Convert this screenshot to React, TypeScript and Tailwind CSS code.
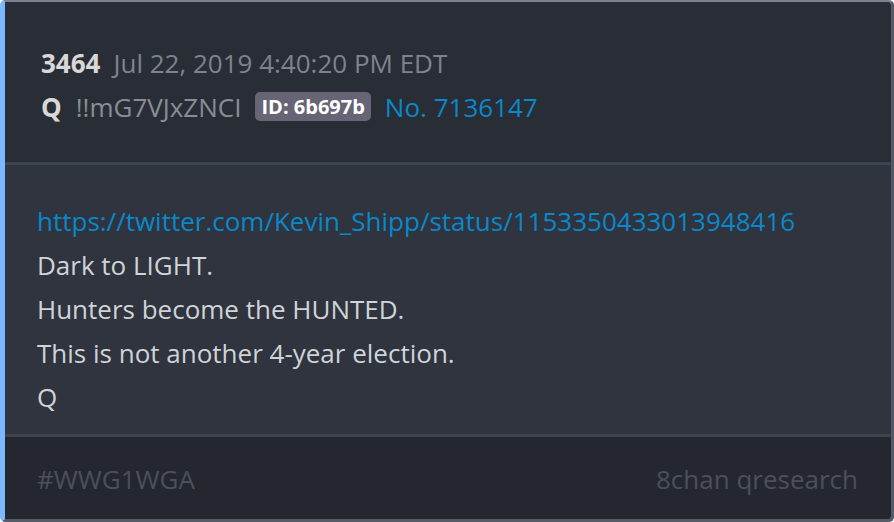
import React from 'react';

const lines = [
  'Dark to LIGHT.',
  'Hunters become the HUNTED.',
  'This is not another 4-year election.',
  'Q',
];

export default function App() {
  return (
    <div className="w-[894px] h-[522px] bg-white font-['Open_Sans',sans-serif]">
      <div className="flex flex-col h-full overflow-hidden rounded-[5px] border-l-[5px] border-l-[#7ab8ff] border-t-2 border-t-[#7c8290] border-r-[3px] border-r-[#555b66] border-b-[3px] border-b-[#555b66]">
        {/* Header */}
        <div className="bg-[#292d36] pl-[36px] pt-[39px] pb-[33px] text-[26px] leading-[44px]">
          <div className="flex items-center">
            <span className="font-bold text-[#d8d8d8]">3464</span>
            <span className="ml-[13px] text-[#7f838d]">Jul 22, 2019 4:40:20 PM EDT</span>
          </div>
          <div className="flex items-center">
            <span className="font-bold text-[#d8d8d8]">Q</span>
            <span className="ml-[14px] text-[#898d95]">!!mG7VJxZNCI</span>
            <span className="ml-[14px] mt-[-2px] rounded-[5px] bg-[#676475] px-[6px] text-[20px] leading-[29px] font-bold text-white">
              ID: 6b697b
            </span>
            <span className="ml-[14px] text-[#0a88c9]">No. 7136147</span>
          </div>
        </div>
        <div className="h-[3px] bg-[#3e444f]" />

        {/* Body */}
        <div className="flex-1 bg-[#2f343e] pl-[32px] pt-[34px] text-[26px] leading-[44px] text-[#d0d3d7]">
          <div className="text-[#0a88c9]">https://twitter.com/Kevin_Shipp/status/1153350433013948416</div>
          {lines.map((l) => (
            <div key={l}>{l}</div>
          ))}
        </div>
        <div className="h-[3px] bg-[#3e444f]" />

        {/* Footer */}
        <div className="flex h-[82px] items-center justify-between bg-[#24272f] pl-[32px] pr-[33px] pt-[2px] text-[26px] text-[#4b505a]">
          <span>#WWG1WGA</span>
          <span>8chan qresearch</span>
        </div>
      </div>
    </div>
  );
}
